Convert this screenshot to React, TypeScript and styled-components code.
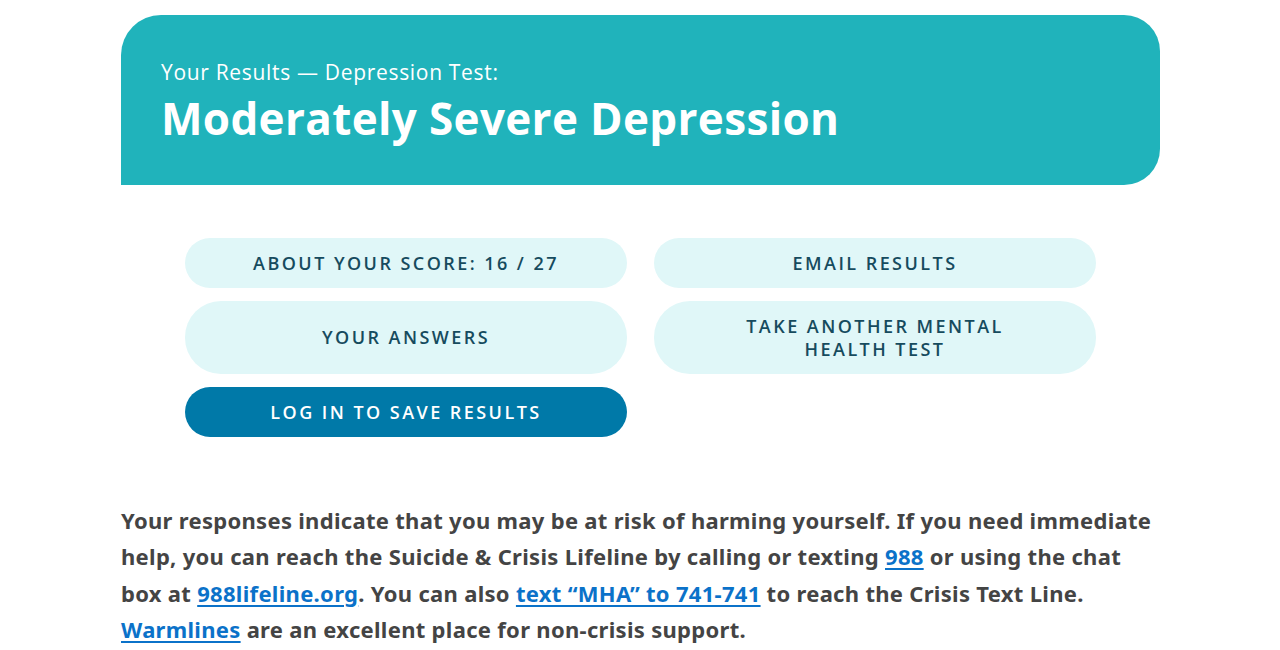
import React from "react";
import styled, { createGlobalStyle } from "styled-components";

const Global = createGlobalStyle`
  html, body { margin: 0; padding: 0; background: #ffffff; }
  body { font-family: "Noto Sans", sans-serif; }
`;

const Page = styled.main`
  width: 1039px;
  margin: 0 auto;
  padding-top: 15px;
  padding-left: 1px;
`;

const Hero = styled.header`
  background: #20b3bb;
  border-radius: 40px 36px 36px 0;
  height: 170px;
  box-sizing: border-box;
  padding: 43px 40px 0;
  color: #ffffff;
`;

const Kicker = styled.p`
  margin: 0;
  font-family: "Open Sans", sans-serif;
  font-weight: 400;
  font-size: 21px;
  line-height: 28px;
  letter-spacing: 0.68px;
`;

const Title = styled.h1`
  margin: 4px 0 0;
  font-family: "Open Sans", sans-serif;
  font-weight: 700;
  font-size: 44px;
  line-height: 56px;
  letter-spacing: 0.35px;
`;

const Actions = styled.div`
  display: grid;
  grid-template-columns: 1fr 1fr;
  column-gap: 27px;
  row-gap: 13px;
  padding: 53px 64px 0;
`;

const Action = styled.button<{ $tall?: boolean; $primary?: boolean }>`
  height: ${(p) => (p.$tall ? "73px" : "50px")};
  border: none;
  border-radius: 36px;
  background: ${(p) => (p.$primary ? "#0079a8" : "#e0f7f8")};
  color: ${(p) => (p.$primary ? "#ffffff" : "#164b5e")};
  font-family: "Open Sans", sans-serif;
  font-weight: 600;
  font-size: 18px;
  line-height: 23px;
  letter-spacing: 2.45px;
  text-transform: uppercase;
  padding: 0 62px;
  cursor: pointer;
`;

const Message = styled.p`
  margin: 65px 0 0;
  font-family: "Noto Sans", sans-serif;
  font-weight: 700;
  font-size: 22px;
  line-height: 36.3px;
  letter-spacing: 0.3px;
  color: #444444;
`;

const Link = styled.a`
  color: #0b72c9;
  text-decoration: underline;
  text-underline-offset: 3px;
  text-decoration-thickness: 2px;
`;

export default function App() {
  return (
    <>
      <Global />
      <Page>
        <Hero>
          <Kicker>Your Results — Depression Test:</Kicker>
          <Title>Moderately Severe Depression</Title>
        </Hero>
        <Actions>
          <Action>About your score: 16 / 27</Action>
          <Action>Email results</Action>
          <Action $tall>Your answers</Action>
          <Action $tall>Take another mental health test</Action>
          <Action $primary>Log in to save results</Action>
        </Actions>
        <Message>
          Your responses indicate that you may be at risk of harming yourself. If you need immediate
          help, you can reach the Suicide &amp; Crisis Lifeline by calling or texting{" "}
          <Link href="#">988</Link> or using the chat box at <Link href="#">988lifeline.org</Link>.
          You can also <Link href="#">text “MHA” to 741-741</Link> to reach the Crisis Text Line.{" "}
          <Link href="#">Warmlines</Link> are an excellent place for non-crisis support.
        </Message>
      </Page>
    </>
  );
}
